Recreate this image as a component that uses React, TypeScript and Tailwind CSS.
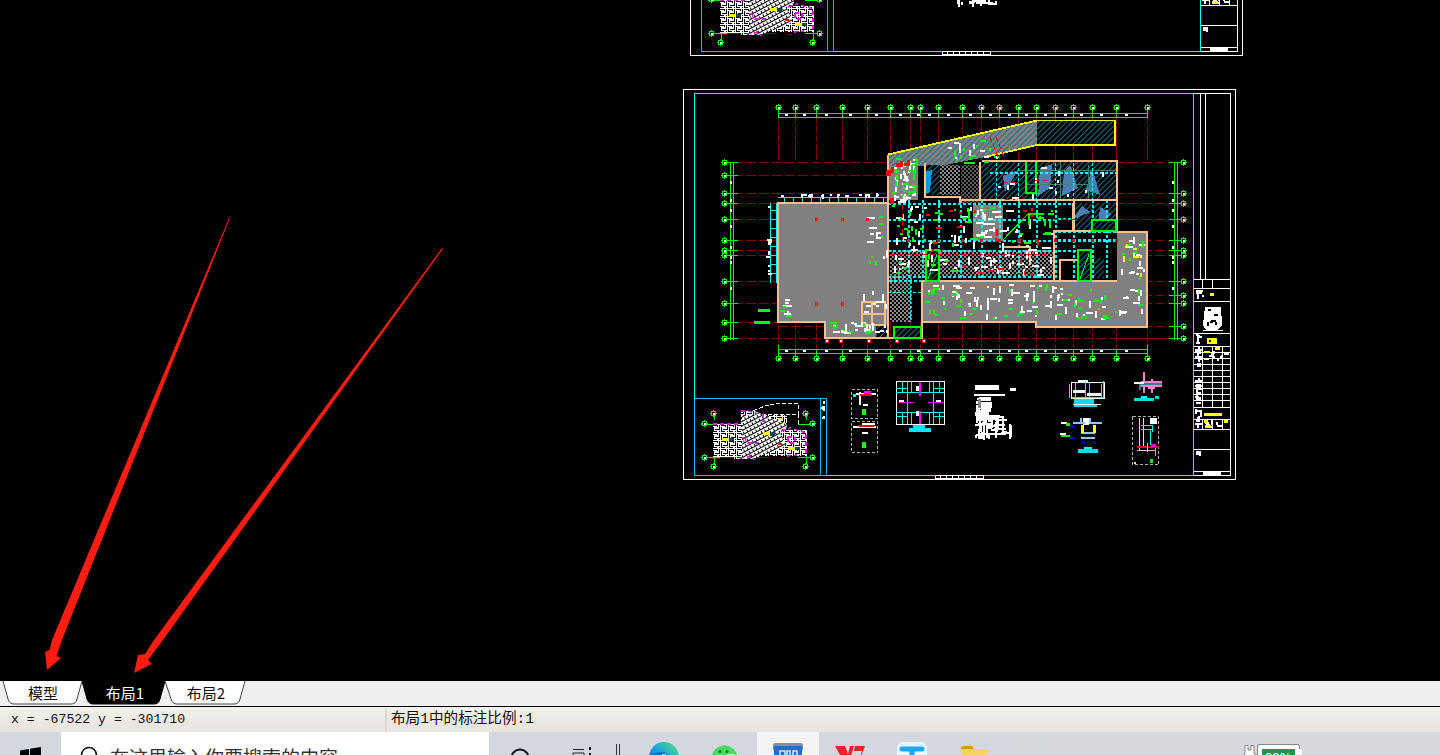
import type { ReactNode } from "react";

const GREEN = "#00ff00";
const CYAN = "#00ffff";
const PEACH = "#ffbf8a";
const AXIS = "#8f0000";

const TOP_AXES = [778, 795, 816, 842, 867, 890, 910, 920, 938, 962, 981, 999, 1018, 1036, 1055, 1073, 1092, 1116, 1147];
const BOTTOM_AXES = [778, 795, 816, 842, 867, 890, 910, 920, 938, 962, 981, 999, 1018, 1036, 1055, 1073, 1092, 1116, 1147];
const LEFT_AXES = [162, 175, 193, 203, 219, 240, 250, 255, 281, 303, 322, 338];
const RIGHT_AXES = [162, 193, 203, 219, 240, 250, 255, 281, 295, 303, 326, 338];

// small seeded generator so the drawing is the same on every load
function seeded(seed: number) {
  let s = seed;
  return () => {
    s = (s + 0x6d2b79f5) | 0;
    let t = Math.imul(s ^ (s >>> 15), 1 | s);
    t = (t + Math.imul(t ^ (t >>> 7), 61 | t)) ^ t;
    return ((t ^ (t >>> 14)) >>> 0) / 4294967296;
  };
}

function Bits({ x, y, w, h, n, seed, color = "#ffffff", long = 7 }: { x: number; y: number; w: number; h: number; n: number; seed: number; color?: string; long?: number }) {
  const r = seeded(seed);
  const items = Array.from({ length: n }, (_, i) => {
    const flat = r() > 0.45;
    const a = 2 + Math.round(r() * long);
    const bw = flat ? a : 2;
    const bh = flat ? 2 : a;
    return <rect key={i} x={Math.round(x + r() * (w - bw))} y={Math.round(y + r() * (h - bh))} width={bw} height={bh} fill={color} />;
  });
  return <g>{items}</g>;
}

function Bubble({ x, y }: { x: number; y: number }) {
  return (
    <g>
      <circle cx={x + 0.5} cy={y + 0.5} r={2.5} fill="#000" stroke={GREEN} strokeWidth={1.2} />
      <rect x={x} y={y} width={2} height={2} fill="#fff" />
    </g>
  );
}

function Box({ x, y, w, h, color, fill = "none", sw = 1, dash }: { x: number; y: number; w: number; h: number; color: string; fill?: string; sw?: number; dash?: string }) {
  return <rect x={x + 0.5} y={y + 0.5} width={w} height={h} fill={fill} stroke={color} strokeWidth={sw} strokeDasharray={dash} />;
}

function Line({ d, color, sw = 1, dash }: { d: string; color: string; sw?: number; dash?: string }) {
  return <path d={d} fill="none" stroke={color} strokeWidth={sw} strokeDasharray={dash} />;
}

function Defs() {
  return (
    <defs>
      <pattern id="hatch" width="4" height="4" patternUnits="userSpaceOnUse" patternTransform="rotate(45)">
        <rect width="4" height="4" fill="#000" />
        <rect width="1.2" height="4" fill="#1d6f8c" />
      </pattern>
      <pattern id="hatchGray" width="4" height="4" patternUnits="userSpaceOnUse" patternTransform="rotate(45)">
        <rect width="4" height="4" fill="#808080" />
        <rect width="1.2" height="4" fill="#23708a" />
      </pattern>
      <pattern id="speckle" width="4" height="4" patternUnits="userSpaceOnUse">
        <rect width="4" height="4" fill="#000" />
        <rect width="2" height="2" fill="#8a8a8a" />
        <rect x="2" y="2" width="2" height="2" fill="#8a8a8a" />
      </pattern>
      <pattern id="maze" width="8" height="8" patternUnits="userSpaceOnUse">
        <rect width="8" height="8" fill="#fff" />
        <path d="M1 1H5V3M7 1V5H3M1 3V7H5M7 7H8" fill="none" stroke="#000" strokeWidth="1" />
      </pattern>
      <pattern id="diag" width="4" height="4" patternUnits="userSpaceOnUse" patternTransform="rotate(-28)">
        <rect width="4" height="4" fill="#fff" />
        <rect y="0" width="4" height="1.4" fill="#000" />
        <rect x="1" y="2" width="1.2" height="2" fill="#000" />
      </pattern>
    </defs>
  );
}

function MiniPlan() {
  return (
    <g>
      <Line d="M704 424H708M713 458.5H720M780 458.5H785M704 457H718M719 457H770M799 457H810" color={AXIS} sw={1} />
      <Line d="M714 414V420M714 456V465M806 414V420M806 456V465M701 424H716M798 424H811M701 457.5H720M798 457.5H811" color={GREEN} />
      <Bubble x={713} y={413} />
      <Bubble x={805} y={413} />
      <Bubble x={704} y={423} />
      <Bubble x={812} y={423} />
      <Bubble x={704} y={457} />
      <Bubble x={812} y={457} />
      <Bubble x={713} y={466} />
      <Bubble x={805} y={466} />
      <path d="M713 424H741V411H755V415H787V430H807V456H752V459H733V457H713Z" fill="url(#maze)" />
      <path d="M742 415H755V411L787 424V430H780L786 447L752 459H742Z" fill="url(#diag)" />
      <path d="M780 432H807V456H782L786 447Z" fill="url(#maze)" opacity="0.85" />
      <Line d="M748 413L765 406L779 403H798V416M762 414L785 414H798V424" color="#fff" dash="4 2" />
      <Line d="M741 411H748L763 415V422M744 437L748 443L758 443M781 431L790 428L806 433V456M788 437H795V443H788ZM787 456L797 455M740 458L750 456L755 460M713 424H741" color="#ff00ff" sw={1.4} dash="4 3" />
      <rect x={722} y={438} width={7} height={3} fill="#ffff00" />
      <rect x={729} y={438} width={5} height={3} fill="#114452" />
      <rect x={763} y={432} width={7} height={3} fill="#ffff00" />
      <rect x={770} y={432} width={5} height={4} fill="#114452" />
      <rect x={788} y={447} width={7} height={3} fill="#ffff00" />
      <rect x={795} y={447} width={5} height={3} fill="#114452" />
      <rect x={778} y={443} width={4} height={2} fill="#ff0000" />
      <rect x={779} y={418} width={4} height={2} fill="#ffff00" />
    </g>
  );
}

function TitleBlock() {
  const rows = [352, 358, 364, 370, 376, 382, 388, 394, 400, 407];
  return (
    <g>
      <Line d="M1200.5 93V279M1205.5 93V279" color="#fff" />
      <Line d="M1194 279.5H1230M1194 288.5H1230M1194 301.5H1230M1194 333.5H1230M1194 346.5H1230M1194 407.5H1230M1194 419.5H1230M1194 429.5H1230M1194 449.5H1230M1194 471.5H1230" color="#fff" />
      {rows.map((y) => <Line key={y} d={`M1194 ${y + 0.5}H1230`} color="#fff" />)}
      <Line d="M1202.5 346V407M1212.5 346V407M1222.5 346V407M1202.5 419V429M1212.5 419V429M1222.5 419V429M1202.5 279V288M1212.5 279V288" color="#fff" />
      <path d="M1205 307H1221L1222 325L1218 330H1206L1203 325Z" fill="#fff" />
      <rect x={1203} y={330} width={20} height={1} fill="#fff" />
      <Bits x={1206} y={308} w={14} h={18} n={6} seed={4} color="#000" long={3} />
      <Bits x={1195} y={289} w={9} h={10} n={5} seed={7} />
      <Bits x={1195} y={334} w={8} h={10} n={5} seed={8} />
      <Bits x={1195} y={347} w={7} h={58} n={26} seed={9} long={5} />
      <Bits x={1195} y={408} w={7} h={21} n={10} seed={10} long={5} />
      <Bits x={1203} y={351} w={26} h={10} n={10} seed={12} long={4} />
      <Bits x={1203} y={419} w={26} h={10} n={8} seed={13} long={4} />
      <Bits x={1195} y={451} w={6} h={5} n={3} seed={15} long={4} />
      <rect x={1207} y={338} width={10} height={6} fill="#ffff00" />
      <rect x={1209} y={340} width={2} height={2} fill="#000" />
      <rect x={1210} y={293} width={4} height={3} fill="#ffff00" />
      <rect x={1215} y={347} width={5} height={3} fill="#ffff00" />
      <rect x={1204} y={351} width={6} height={2} fill="#ffff00" />
      <rect x={1204} y={413} width={18} height={3} fill="#ffff00" />
      <rect x={1204} y={420} width={4} height={3} fill="#ffff00" />
      <rect x={1224} y={420} width={4} height={3} fill="#ffff00" />
      <rect x={1205} y={425} width={6} height={3} fill="#ffff00" />
      <rect x={1203} y={472} width={18} height={3} fill="#fff" />
    </g>
  );
}

function Sheet() {
  return (
    <g>
      <Box x={683} y={89} w={552} h={390} color="#fff" />
      <Box x={694} y={93} w={499} h={382} color={CYAN} />
      <Line d="M1193.5 93H1230.5V475H1193.5" color="#fff" />
      <Box x={694} y={398} w={132} h={77} color="#00bfff" />
      <Line d="M820.5 398V475" color="#00bfff" />
      <Bits x={822} y={400} w={3} h={21} n={8} seed={21} long={2} />
      <Box x={935} y={475} w={48} h={3} color="#fff" />
      <Line d="M940.5 475V478M946.5 475V478M952.5 475V478M958.5 475V478M964.5 475V478M970.5 475V478M976.5 475V478" color="#fff" />
      <MiniPlan />
      <TitleBlock />
    </g>
  );
}

function Details() {
  return (
    <g>
      <Box x={851} y={389} w={26} h={29} color="#b0b0b0" dash="3 2" />
      <Box x={851} y={421} w={26} h={31} color="#b0b0b0" dash="3 2" />
      <Line d="M856 394H876M860 392V405M863 405H868M862 424H875M853 427H876M862 433H868" color="#fff" sw={1.5} />
      <rect x={864} y={391} width={7} height={3} fill="#ff00ff" />
      <rect x={860} y={394} width={12} height={2} fill="#ff0000" />
      <rect x={859} y={425} width={15} height={2} fill="#ff0000" />
      <rect x={862} y={409} width={4} height={6} fill={GREEN} />
      <rect x={862} y={442} width={4} height={6} fill={GREEN} />
      <rect x={853} y={394} width={3} height={3} fill={CYAN} />
      <Box x={896} y={381} w={48} h={43} color="#fff" sw={1.4} />
      <Line d="M907.5 381V424M933.5 381V424M896 392.5H944M896 412.5H944M902.5 381V392M939.5 381V392M902.5 412V424M939.5 412V424M896 388.5H907M933 388.5H944M896 416.5H907M933 416.5H944M911 381V392M929 381V392M911 412V424M929 412V424" color={CYAN} />
      <Line d="M920 382V396M920 411V424M899 402.5H914M928 402.5H943" color="#ff00ff" sw={1.4} />
      <rect x={916} y={386} width={3} height={5} fill="#fff" />
      <rect x={916} y={411} width={3} height={5} fill="#fff" />
      <rect x={899} y={400} width={5} height={2} fill="#fff" />
      <rect x={936} y={400} width={5} height={2} fill="#fff" />
      <rect x={909} y={428} width={22} height={4} fill="#00e5ff" />
      <rect x={913} y={425} width={12} height={3} fill="#00e5ff" />

      {/* notes */}
      <rect x={975} y={385} width={24} height={5} fill="#fff" />
      <rect x={1010} y={388} width={6} height={3} fill="#fff" />
      <rect x={974} y={394} width={31} height={2} fill="#fff" />
      <Bits x={975} y={396} w={18} h={26} n={42} seed={31} long={12} />
      <Bits x={975} y={414} w={32} h={19} n={30} seed={32} long={14} />
      <Bits x={975} y={428} w={42} h={8} n={14} seed={33} long={14} />
      <Bits x={975} y={433} w={15} h={6} n={10} seed={34} long={6} />
      <rect x={978} y={399} width={3} height={9} fill="#888" />

      {/* section details */}
      <Box x={1071} y={382} w={33} h={16} color="#fff" />
      <Line d="M1069 384V398M1103.5 381V398M1072 397H1103M1075 383V397M1101 384V398M1085 382V398M1089 382V398" color={CYAN} />
      <rect x={1073} y={390} width={12} height={3} fill="#fff" />
      <rect x={1087} y={393} width={14} height={3} fill="#fff" />
      <rect x={1078} y={380} width={10} height={2} fill="#fff" />
      <rect x={1074} y={399} width={20} height={5} fill="#10d8e8" />
      <rect x={1073} y={404} width={28} height={1} fill="#fff" />
      <rect x={1074} y={405} width={23} height={2} fill="#10d8e8" />

      <Line d="M1144 372V393M1152 379V393M1148 388H1155M1141 382H1162M1141 386H1162" color="#ff80d0" sw={1.5} />
      <Line d="M1139 384H1162M1140 384V390" color="#35808f" sw={1.4} />
      <rect x={1134} y={398} width={20} height={3} fill="#10d8e8" />
      <rect x={1141} y={396} width={6} height={2} fill={CYAN} />
      <rect x={1155} y={396} width={4} height={3} fill="#10d8e8" />
      <rect x={1134} y={382} width={10} height={2} fill="#fff" />

      <rect x={1061} y={422} width={6} height={2} fill="#fff" />
      <rect x={1060} y={433} width={6} height={2} fill="#fff" />
      <rect x={1061} y={435} width={9} height={2} fill={GREEN} />
      <rect x={1066} y={423} width={4} height={3} fill={GREEN} />
      <rect x={1070} y={425} width={5} height={3} fill="#0000d0" />
      <rect x={1070} y={437} width={5} height={2} fill="#0000d0" />
      <rect x={1083} y={418} width={6} height={7} fill="#fff" />
      <Line d="M1081 418V424M1090 418V424M1073 423H1085M1089 423H1102M1081 433H1095M1081 438H1095" color="#8fc8ff" sw={1.5} />
      <rect x={1081} y={425} width={3} height={8} fill="#ffff00" />
      <rect x={1093} y={425} width={3} height={8} fill="#ffff00" />
      <rect x={1082} y={441} width={3} height={3} fill="#0000d0" />
      <rect x={1093} y={441} width={3} height={3} fill="#0000d0" />
      <rect x={1078} y={449} width={20} height={4} fill="#10d8e8" />
      <rect x={1084} y={447} width={8} height={2} fill={CYAN} />

      <Box x={1132} y={416} w={26} h={48} color="#b0b0b0" dash="3 2" />
      <Line d="M1139.5 418V450M1143.5 418V447" color="#ffff00" />
      <Line d="M1141 425H1152M1141 429H1152M1152 425V432M1150 430V445M1155 445V456" color={CYAN} />
      <rect x={1150} y={418} width={7} height={6} fill="#fff" />
      <rect x={1137} y={446} width={22} height={2} fill="#ff0000" />
      <Line d="M1137 450H1155M1147 443V452" color="#ffb0c0" />
      <rect x={1151} y={444} width={5} height={3} fill="#ff00ff" />
      <rect x={1150} y={459} width={3} height={4} fill={GREEN} />
      <rect x={1134} y={462} width={2} height={2} fill="#ffff00" />
    </g>
  );
}

function Plan() {
  return (
    <g>
      {/* axis lines */}
      {TOP_AXES.map((x) => <Line key={x} d={`M${x + 0.5} 117V160`} color={AXIS} dash="7 2" />)}
      {BOTTOM_AXES.map((x) => <Line key={x} d={`M${x + 0.5} 322V349`} color={AXIS} dash="9 2" />)}
      {LEFT_AXES.map((y) => <Line key={y} d={`M733 ${y + 0.5}H890`} color={AXIS} dash="10 3" />)}
      {RIGHT_AXES.map((y) => <Line key={y} d={`M1116 ${y + 0.5}H1174`} color={AXIS} dash="10 3" />)}
      <Line d="M733 338.5H1174" color={AXIS} dash="10 3" />
      <Line d="M778 326.5H825" color={AXIS} dash="10 3" />

      {/* grids */}
      <Line d="M778.5 108V117M778 113.5H1147M778 117.5H1147M778 349.5H1147M778 353.5H1147M730.5 162V340M733.5 162V340M1174.5 162V340M1177.5 162V340M1147.5 108V117M1147.5 345V358M778.5 345V358" color={GREEN} />
      {TOP_AXES.map((x) => <g key={x}><Line d={`M${x + 0.5} 108V118M${x + 0.5} 349V358`} color={GREEN} /><Bubble x={x} y={107} /><Bubble x={x} y={358} /></g>)}
      {LEFT_AXES.map((y) => <g key={y}><Line d={`M725 ${y + 0.5}H738`} color={GREEN} /><Bubble x={724} y={y} /></g>)}
      {RIGHT_AXES.map((y) => <g key={y}><Line d={`M1169 ${y + 0.5}H1182`} color={GREEN} /><Bubble x={1183} y={y} /></g>)}
      {TOP_AXES.slice(0, 18).map((x, i) => <g key={x}>
        <rect x={x + 7 + (i % 3)} y={114} width={3} height={2} fill="#fff" />
        <rect x={x + 7 + (i % 3)} y={350} width={3} height={2} fill="#fff" />
      </g>)}
      {LEFT_AXES.slice(1, 9).map((y) => <g key={y}><rect x={730} y={y + 6} width={2} height={3} fill="#fff" /><rect x={1172} y={y + 6} width={2} height={3} fill="#fff" /></g>)}

      {/* outer cyan strip */}
      <Line d="M770.5 203V283M776 203V283" color={CYAN} />
      {[210, 219, 228, 237, 246, 255, 264, 273].map((y) => <Line key={y} d={`M770 ${y + 0.5}H777`} color={CYAN} />)}
      <Line d="M778 197.5H888" color={CYAN} />
      {[784, 793, 802, 811, 820, 829, 838, 847, 856, 865, 874, 883].map((x) => <Line key={x} d={`M${x + 0.5} 197V203`} color={CYAN} />)}
      <Bits x={778} y={194} w={110} h={3} n={18} seed={41} long={3} />
      <Bits x={768} y={204} w={2} h={80} n={9} seed={42} long={4} />

      {/* gray floors */}
      <path d="M778 203H888V338H825V322H778Z" fill="#808080" />
      <path d="M922 281H1117V232H1147V327H1036V322H922Z" fill="#808080" />
      <path d="M888 155L918 147V200H888Z" fill="#808080" />
      <path d="M888 155L1037 121V145L985 157L940 166H888Z" fill="url(#hatchGray)" />
      <path d="M1037 121H1115V145H1037Z" fill="url(#hatch)" />
      <Line d="M888 154.5L1037 120.5H1115V145H1037L985 157" color="#ffff00" sw={1.8} />

      {/* rooms */}
      <rect x={980} y={162} width={137} height={38} fill="url(#hatch)" />
      <rect x={1073} y={203} width={44} height={28} fill="url(#hatch)" />
      <rect x={925} y={165} width={35} height={30} fill="url(#hatch)" />
      <rect x={940} y={165} width={20} height={30} fill="url(#speckle)" />
      <rect x={973} y={205} width={30} height={36} fill="#808080" />
      <rect x={961} y={165} width={19} height={38} fill="url(#speckle)" opacity="0.7" />
      <rect x={890} y={250} width={164} height={26} fill="url(#speckle)" />
      <rect x={890} y={276} width={22} height={46} fill="url(#speckle)" />
      <rect x={1092} y={258} width={12} height={20} fill="url(#hatch)" />
      <rect x={876} y={325} width={12} height={13} fill="url(#hatch)" />

      {/* blue blotches in hatched rooms */}
      <path d="M1040 168L1052 164L1050 188L1038 196ZM1070 165L1078 188L1062 196L1064 172ZM1092 168L1100 195L1086 190ZM1003 176L1018 170L1005 192ZM1082 206L1072 220L1090 212ZM1100 207L1112 214L1098 226Z" fill="#4a7fb5" />
      <path d="M925 172L932 170L930 192L924 194Z" fill="#00a0e0" />
      <Line d="M1018 170H1116M1025 184H1090M1060 162V200M1088 165V200" color="#3f7f70" />

      {/* cyan dashed structure */}
      <Line d="M888 203.5H1075M888 219.5H1056M888 240.5H1116M888 250.5H1092M888 276.5H1054M889 281H1056M990 172.5H1116M1058 240H1116M1058 232H1116M1058 219H1074" color={CYAN} sw={2} dash="3 2" />
      {[908, 922, 938, 960, 981, 999, 1018, 1036, 1055, 1073, 1092, 1106].map((x) => <Line key={x} d={`M${x + 0.5} 200V281`} color={CYAN} sw={2} dash="3 2" />)}
      <Line d="M910.5 281V322M888 292.5H922M996 163V200M1018 163V200M1036 163V200M1055 163V200M1073 163V200M1092 163V200" color={CYAN} dash="3 2" />

      {/* peach walls */}
      <path d="M888 203H778V322H825V338H922V327H922V322H1036V327H1147V232H1117V161H982M888 155V203M888 203V338M922 281V322M922 281H1117M980 162V200H1117M960 200H1074V231H1054V281M1054 231H1117M1073 203V231M1060 281V260H1094M925 163V197H960V203M1003 247H1030V265M862 302H885V325H862ZM872 302V325M862 314H885" fill="none" stroke={PEACH} strokeWidth="2.5" />

      {/* green boxes */}
      <rect x={926} y={250} width={13} height={31} fill="url(#hatch)" stroke={GREEN} strokeWidth="1.5" />
      <Line d="M928 279L937 254" color={GREEN} />
      <rect x={1078} y={250} width={13} height={31} fill="url(#hatch)" stroke={GREEN} strokeWidth="1.5" />
      <Line d="M1080 279L1089 254" color={GREEN} />
      <rect x={1092} y={220} width={24} height={11} fill="url(#hatch)" stroke={GREEN} strokeWidth="1.5" />
      <rect x={894} y={327} width={27} height={11} fill="url(#hatch)" stroke={GREEN} strokeWidth="1.5" />
      <Line d="M1026 162V193H1036V162M1003 240L1028 214H1044M1048 214H1054" color={GREEN} sw={1.2} />
      <Line d="M1028 193H1040" color={GREEN} />

      {/* fixtures */}
      <Bits x={892} y={158} w={26} h={46} n={36} seed={51} long={6} />
      <Bits x={892} y={158} w={26} h={46} n={22} seed={52} color={GREEN} long={5} />
      <Bits x={890} y={205} w={70} h={70} n={40} seed={53} long={6} />
      <Bits x={890} y={205} w={70} h={70} n={25} seed={54} color={GREEN} long={5} />
      <Bits x={960} y={205} w={95} h={70} n={36} seed={55} long={7} />
      <Bits x={960} y={205} w={95} h={40} n={22} seed={56} color={GREEN} long={6} />
      <Bits x={980} y={165} w={130} h={36} n={14} seed={57} long={5} />
      <Bits x={945} y={140} w={55} h={26} n={14} seed={58} color={GREEN} long={6} />
      <Bits x={945} y={140} w={55} h={26} n={10} seed={59} long={6} />
      <Bits x={975} y={250} w={80} h={28} n={20} seed={60} long={6} />
      <Bits x={1118} y={235} w={28} h={46} n={14} seed={61} long={6} />
      <Bits x={1118} y={235} w={28} h={46} n={6} seed={62} color={GREEN} long={5} />
      <Bits x={925} y={284} w={220} h={36} n={80} seed={63} long={6} />
      <Bits x={925} y={284} w={220} h={36} n={48} seed={64} color={GREEN} long={4} />
      <Bits x={830} y={322} w={58} h={12} n={22} seed={65} long={6} />
      <Bits x={830} y={322} w={58} h={12} n={10} seed={66} color={GREEN} long={4} />
      <Bits x={866} y={215} w={22} h={50} n={12} seed={67} long={7} />
      <Bits x={866} y={215} w={22} h={50} n={6} seed={68} color={GREEN} long={3} />
      <Bits x={780} y={295} w={12} h={24} n={6} seed={69} long={7} />
      <Bits x={780} y={295} w={12} h={24} n={3} seed={70} color={GREEN} long={4} />
      <Bits x={862} y={285} w={26} h={32} n={12} seed={71} long={6} />
      <Bits x={1120} y={240} w={26} h={40} n={5} seed={72} color="#ffff00" long={6} />
      <Bits x={975} y={205} w={26} h={34} n={14} seed={73} long={8} />
      <rect x={758} y={309} width={12} height={3} fill={GREEN} />
      <rect x={754} y={321} width={16} height={3} fill={GREEN} />

      {/* red accents */}
      {[[816, 219], [842, 219], [867, 219]].map(([x, y]) => <Box key={x} x={x - 1} y={y - 1} w={2} h={2} color="#ff0000" />)}
      {[[816, 303], [842, 303]].map(([x, y]) => <Box key={x} x={x - 1} y={y - 1} w={2} h={3} color="#ff0000" />)}
      {[825, 839, 867, 895, 922].map((x) => <Box key={x} x={x} y={339} w={3} h={3} color="#ff0000" fill="#fff" />)}
      <path d="M886 170h5v-3h3v6h-3v3h-5ZM896 163h4v-2h3v6h-7ZM904 163h3v-3h3v6h-6ZM890 198h4v6h-4Z" fill="#ff0000" />
      <Line d="M902 205V240M923 205V240M996 137L1004 157M990 137L998 157M890 254H1050M1005 199H1015M1054 219H1075M1035 180H1052M1003 182H1016" color="#e00000" dash="5 3" />
      {[908, 938, 962, 981, 999, 1018, 1036, 1055, 1073, 1092, 1116].map((x) => <rect key={x} x={x - 1} y={239} width={3} height={3} fill="#e00000" />)}
      <Bits x={925} y={205} w={115} h={75} n={22} seed={74} color="#ff0000" long={5} />
    </g>
  );
}

function Arrows() {
  return (
    <g fill="#ff1c10" shapeRendering="geometricPrecision">
      <path d="M229.5 217L230 218L62 640L56.5 656L61 658L47 670L45 652L49.5 650L52 640Z" />
      <path d="M442 248L442.8 249L163 640L148 660L152 664L134 673L138 655L145 654L154 640Z" />
    </g>
  );
}

function Tab({ label, width, active, d, shift }: { label: string; width: number; active?: boolean; d: string; shift: number }) {
  return (
    <div className="relative flex h-[24px] shrink-0 items-center justify-center pb-[2px]" style={{ width, paddingLeft: shift }}>
      <svg className="absolute inset-0" width={width} height={24}>
        <path d={d} fill={active ? "#000" : "#fff"} stroke={active ? "#000" : "#444"} />
        <rect x={2} y={0} width={width - 4} height={1} fill={active ? "#000" : "#fff"} />
      </svg>
      <span className={`relative text-[15px] leading-none ${active ? "text-white" : "text-[#111]"}`}>{label}</span>
    </div>
  );
}

function Slot({ width, top, children, bg }: { width: number; top: number; children: ReactNode; bg?: string }) {
  return (
    <div className={`flex shrink-0 justify-center ${bg ?? ""}`} style={{ width, paddingTop: top }}>
      {children}
    </div>
  );
}

export default function App() {
  return (
    <div
      className="flex h-[755px] w-[1440px] flex-col overflow-hidden bg-black"
      style={{ fontFamily: '"Noto Sans CJK SC", "Liberation Sans", sans-serif' }}
    >
      <svg width={1440} height={681} viewBox="0 0 1440 681" className="block shrink-0" shapeRendering="crispEdges">
        <Defs />
        <g transform="translate(7 -424)">
          <Sheet />
        </g>
        <Bits x={955} y={0} w={44} h={5} n={18} seed={81} long={8} />
        <Sheet />
        <Plan />
        <Details />
        <Arrows />
      </svg>

      {/* layout tabs */}
      <div className="flex h-[26px] shrink-0 border-b border-black bg-[#f0f0f0] pl-[2px]">
        <Tab label="模型" width={80} shift={2} d="M1 0L6 18Q7.5 23 12 23H69Q74 23 75 18L80 0" />
        <Tab label="布局1" width={83} shift={3} active d="M0 0L5 18Q6.5 23 11 23H72Q77 23 78 18L83 0Z" />
        <Tab label="布局2" width={81} shift={1} d="M0 0L6 18Q7.5 23 12 23H69Q74 23 75 18L80 0" />
      </div>

      {/* status bar */}
      <div className="flex h-[25px] shrink-0 items-center bg-gradient-to-b from-[#f1f0eb] to-[#e8e4df] text-[#111]">
        <div className="w-[385px] shrink-0 pl-[11px] pt-[1px] text-[13.2px]" style={{ fontFamily: '"Liberation Mono", monospace' }}>
          x = -67522 y = -301710
        </div>
        <div
          className="flex h-[23px] items-center border-l-2 border-[#dcdad5] pl-[4px] pt-[1px] text-[14.6px]"
          style={{ fontFamily: '"Liberation Mono", "Noto Sans CJK SC", monospace' }}
        >
          布局1中的标注比例:1
        </div>
      </div>

      {/* windows taskbar, only its top shows */}
      <div className="flex h-[48px] shrink-0 bg-gradient-to-r from-[#d2d7e0] via-[#d4d7df] to-[#d6d8dc]">
        <Slot width={61} top={15}>
          <svg width={21} height={21} viewBox="0 0 21 21">
            <path d="M0 3.5L9 2V10H0ZM10 1.8L21 0V10H10Z" fill="#000" />
          </svg>
        </Slot>
        <div className="flex h-[48px] w-[428px] shrink-0 bg-white pl-[19px] pt-[14px]">
          <svg width={18} height={18} viewBox="0 0 18 18">
            <circle cx={9} cy={9} r={7.5} fill="none" stroke="#111" strokeWidth={1.6} />
          </svg>
          <span className="ml-[12px] text-[19px] leading-[22px] text-[#333]">在这里输入你要搜索的内容</span>
        </div>
        <Slot width={62} top={16}>
          <svg width={20} height={20} viewBox="0 0 20 20">
            <circle cx={10} cy={10} r={8.5} fill="none" stroke="#111" strokeWidth={2} />
          </svg>
        </Slot>
        <Slot width={62} top={15}>
          <svg width={20} height={20} viewBox="0 0 20 20">
            <path d="M1 2.5H12M1 6H12M1 6V14M12 6V14M1 12H12" fill="none" stroke="#222" strokeWidth={1} />
            <rect x={17} y={0} width={2} height={3} fill="#111" />
            <rect x={17} y={6} width={2} height={4} fill="#111" />
          </svg>
        </Slot>
        <Slot width={10} top={12}>
          <svg width={6} height={20} viewBox="0 0 6 20">
            <path d="M1.5 0V20M4.5 0V20" stroke="#333" strokeWidth={1} />
          </svg>
        </Slot>
        <div className="w-[10px] shrink-0" />
        <Slot width={62} top={10}>
          <svg width={30} height={30} viewBox="0 0 30 30">
            <defs>
              <linearGradient id="edge" x1="0" y1="1" x2="1" y2="0">
                <stop offset="0" stopColor="#0c59a4" />
                <stop offset="0.5" stopColor="#1ba1e2" />
                <stop offset="1" stopColor="#50e66c" />
              </linearGradient>
            </defs>
            <circle cx={15} cy={15} r={15} fill="url(#edge)" />
            <path d="M0 16Q10 6 20 13Q14 11 12 17Q10 24 16 30H10Q0 26 0 16Z" fill="#0f6fc0" />
            <circle cx={15} cy={15} r={3} fill="#e8f2f8" />
          </svg>
        </Slot>
        <Slot width={58} top={13}>
          <svg width={27} height={27} viewBox="0 0 27 27">
            <circle cx={13.5} cy={13.5} r={13} fill="#4cd964" />
            <circle cx={9} cy={6.5} r={1.6} fill="#157a32" />
            <circle cx={16} cy={6.5} r={1.6} fill="#157a32" />
            <ellipse cx={20} cy={16} rx={9} ry={7} fill="#fff" />
          </svg>
        </Slot>
        <div className="w-[4px] shrink-0" />
        <Slot width={62} top={10} bg="bg-[#f3f4f6]">
          <svg width={30} height={30} viewBox="0 0 30 30">
            <rect x={0} y={1} width={30} height={8} rx={2} fill="#8a8f96" />
            <rect x={1} y={4} width={28} height={26} rx={1} fill="#1f6fd0" />
            <path d="M7 14V9H12V14M14 14V9H17V14M20 14V9H24V14" fill="none" stroke="#cfe2fb" strokeWidth={1.6} />
          </svg>
        </Slot>
        <Slot width={62} top={14}>
          <svg width={30} height={24} viewBox="0 0 30 24">
            <path d="M0 0H10L13 8L15 0H19L14 16H9ZM20 0H30L21 24H16L19 15H24L27 5H19Z" fill="#f0232c" />
          </svg>
        </Slot>
        <Slot width={62} top={10}>
          <svg width={30} height={30} viewBox="0 0 30 30">
            <rect x={0} y={0} width={30} height={30} rx={6} fill="#eaf6ff" />
            <path d="M5 7H25" stroke="#1ea7f2" strokeWidth={5} strokeLinecap="round" />
            <path d="M15 7V26" stroke="#1ea7f2" strokeWidth={5} />
          </svg>
        </Slot>
        <Slot width={62} top={13}>
          <svg width={28} height={26} viewBox="0 0 28 26">
            <path d="M1 3Q1 1 3 1H11Q13 1 14 4H1Z" fill="#d99a0a" />
            <rect x={1} y={4} width={27} height={22} fill="#fad461" />
          </svg>
        </Slot>
        <div className="ml-[238px] flex shrink-0 pt-[13px]">
          <svg width={14} height={18} viewBox="0 0 14 18">
            <path d="M2 0.5H5V5H8V0.5H11V9H13V18H1V9H2Z" fill="#fff" stroke="#888" strokeWidth={1} />
          </svg>
          <div className="ml-px h-[24px] w-[41px] rounded-[2px] border-2 border-[#fff] bg-white p-[2px] shadow-[0_0_0_1px_#888]">
            <div className="h-full bg-[#1a9850] text-center text-[13px] leading-[18px] text-white">99%</div>
          </div>
          <div className="mt-[4px] h-[10px] w-[3px] bg-white" />
        </div>
      </div>
    </div>
  );
}
